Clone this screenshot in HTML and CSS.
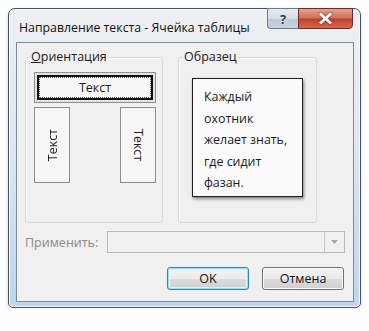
FILE: index.html
```html
<!DOCTYPE html>
<html lang="ru">
<head>
    <meta charset="UTF-8">
    <title>Направление текста - Ячейка таблицы</title>
    <link rel="stylesheet" href="styles.css">
</head>
<body>
    <div class="window">
        <div class="titlebar">
            <span class="title">Направление текста - Ячейка таблицы</span>
            <div class="caption-btn help">?</div>
            <div class="caption-btn close">
                <svg width="13" height="11" viewBox="0 0 13 11">
                    <path d="M2 1.5 L11 9.5 M11 1.5 L2 9.5" stroke="#fff" stroke-width="2.8" stroke-linecap="square"/>
                </svg>
            </div>
        </div>
        <div class="content">
            <div class="groups">
                <div class="group orient">
                    <div class="group-title"><u>О</u>риентация</div>
                    <div class="orient-h">
                        <div class="orient-h-inner">Текст</div>
                    </div>
                    <div class="orient-v-row">
                        <div class="orient-v"><span class="up">Текст</span></div>
                        <div class="orient-v"><span class="down">Текст</span></div>
                    </div>
                </div>
                <div class="group sample">
                    <div class="group-title">Образец</div>
                    <div class="sample-box">
                        Каждый<br>
                        охотник<br>
                        желает знать,<br>
                        где сидит<br>
                        фазан.
                    </div>
                </div>
            </div>
            <div class="apply-row">
                <span class="apply-label">Применить:</span>
                <div class="combo">
                    <div class="combo-arrow">
                        <svg width="7" height="4" viewBox="0 0 7 4"><path d="M0 0 H7 L3.5 4 Z" fill="#a8a8a8"/></svg>
                    </div>
                </div>
            </div>
            <div class="button-row">
                <button class="btn default">OK</button>
                <button class="btn">Отмена</button>
            </div>
        </div>
    </div>
</body>
</html>
```

FILE: styles.css
```css
body {
    margin: 0;
    background: #fdfdfd;
    font-family: 'Open Sans', 'Noto Sans', sans-serif;
    font-size: 12px;
    color: #1a1a1a;
}
.window {
    box-sizing: border-box;
    margin: 8px 0 0 8px;
    width: 353px;
    height: 300px;
    border: 1px solid #4a5058;
    border-radius: 7px 7px 5px 5px;
    background: linear-gradient(180deg, #eef0f2 0%, #e2e9f1 40%, #bcd5ef 100%);
    box-shadow: inset 0 0 0 1px #f6f9fc, 0 2px 4px #0002;
    padding: 0 6px 5px 7px;
    display: flex;
    flex-direction: column;
}
.titlebar {
    height: 33px;
    display: flex;
    align-items: flex-start;
    flex-shrink: 0;
}
.title {
    flex: 1;
    padding: 10px 0 0 3px;
    font-size: 12.3px;
    color: #111;
}
.caption-btn {
    margin-top: -1px;
    height: 21px;
    box-sizing: border-box;
    border: 1px solid #707a86;
    display: flex;
    align-items: center;
    justify-content: center;
}
.help {
    width: 31px;
    border-radius: 0 0 0 4px;
    border-right: none;
    background: linear-gradient(180deg, #e6ebf1 0%, #d4dce6 50%, #bcc8d6 51%, #c9d3df 100%);
    color: #2f3a48;
    font-weight: bold;
    font-size: 13px;
    text-shadow: 0 0 2px #fff;
}
.close {
    width: 55px;
    margin-right: 1px;
    border-radius: 0 0 4px 0;
    border-color: #6b2a24;
    background: linear-gradient(180deg, #e5a291 0%, #d3715d 45%, #c1412c 55%, #d26b4f 100%);
}
.close svg {
    filter: drop-shadow(0 0 1px #6b1a10);
}
.content {
    flex: 1;
    border: 1px solid #7c8c9c;
    background: #f0f0f0;
    display: flex;
    flex-direction: column;
}
.groups {
    display: flex;
    gap: 15px;
    margin: 14px 0 0 8px;
}
.group {
    box-sizing: border-box;
    height: 166px;
    border: 1px solid #d8dadd;
    border-radius: 3px;
    box-shadow: inset 1px 1px #fafafa;
}
.orient {
    width: 138px;
}
.sample {
    width: 139px;
}
.group-title {
    width: fit-content;
    margin: -9px 0 0 4px;
    padding: 0 1px;
    line-height: 16px;
    font-size: 12.5px;
    background: #f0f0f0;
}
.orient-h {
    margin: 7px 0 0 8px;
    width: 122px;
    height: 31px;
    box-sizing: border-box;
    border: 1px solid #8e8e8e;
    padding: 2px;
    background: #e4e4e4;
}
.orient-h-inner {
    box-sizing: border-box;
    height: 25px;
    border: 2px solid #111;
    outline: 1px dotted #555;
    outline-offset: -3px;
    background: #f7f7f7;
    display: flex;
    align-items: center;
    justify-content: center;
    font-size: 12.5px;
}
.orient-v-row {
    margin: 4px 0 0 8px;
    width: 122px;
    display: flex;
    justify-content: space-between;
}
.orient-v {
    box-sizing: border-box;
    width: 36px;
    height: 76px;
    border: 1px solid #8e8e8e;
    background: #f6f6f6;
    display: flex;
    align-items: center;
    justify-content: center;
    font-size: 12.5px;
}
.up {
    writing-mode: vertical-rl;
    transform: rotate(180deg);
}
.down {
    writing-mode: vertical-rl;
}
.sample-box {
    box-sizing: border-box;
    margin: 13px 0 0 13px;
    width: 111px;
    height: 119px;
    border: 1px solid #1e1e1e;
    background: #fafafa;
    box-shadow: 1px 2px 3px #0007;
    padding: 7px 0 0 11px;
    line-height: 21.6px;
    font-size: 12.4px;
}
.apply-row {
    display: flex;
    align-items: center;
    margin: 8px 0 0 8px;
}
.apply-label {
    width: 82px;
    color: #8a8a8a;
    font-size: 12.5px;
}
.combo {
    box-sizing: border-box;
    width: 238px;
    height: 22px;
    border: 1px solid #b9b9b9;
    background: #f0f0f0;
    display: flex;
    justify-content: flex-end;
}
.combo-arrow {
    width: 19px;
    border-left: 1px solid #c8c8c8;
    display: flex;
    align-items: center;
    justify-content: center;
}
.button-row {
    display: flex;
    justify-content: flex-end;
    gap: 13px;
    margin: 14px 9px 0 0;
}
.btn {
    width: 82px;
    height: 23px;
    border: 1px solid #707070;
    border-radius: 3px;
    background: linear-gradient(180deg, #f2f2f2 0%, #ebebeb 50%, #dddddd 51%, #cfcfcf 100%);
    box-shadow: inset 0 0 0 1px #fbfbfb;
    font-family: inherit;
    font-size: 12.5px;
    color: #111;
    padding: 0;
}
.btn.default {
    border-color: #3c7fb1;
    box-shadow: inset 0 0 0 1px #9fdcf5, inset 0 0 0 2px #d9f1fb;
}
```
